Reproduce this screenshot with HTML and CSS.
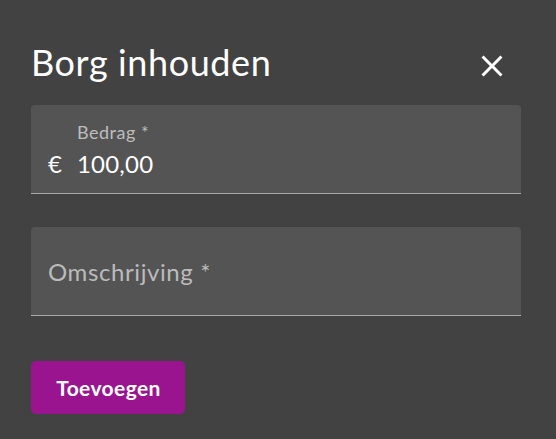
FILE: index.html
```html
<!DOCTYPE html>
<html lang="nl">
<head>
<meta charset="utf-8">
<title>Borg inhouden</title>
<link rel="stylesheet" href="styles.css">
</head>
<body>
<div class="dialog">
  <div class="header">
    <h1 class="title">Borg inhouden</h1>
    <button class="close" aria-label="Sluiten">
      <svg viewBox="0 0 24 24" width="36" height="36"><path fill="#ffffff" d="M19 6.41L17.59 5 12 10.59 6.41 5 5 6.41 10.59 12 5 17.59 6.41 19 12 13.41 17.59 19 19 17.59 13.41 12z"/></svg>
    </button>
  </div>
  <div class="field field-filled">
    <span class="label">Bedrag *</span>
    <span class="prefix">€</span>
    <span class="value">100,00</span>
  </div>
  <div class="field field-empty">
    <span class="placeholder">Omschrijving *</span>
  </div>
  <div class="actions">
    <button class="btn">Toevoegen</button>
  </div>
</div>
</body>
</html>
```
FILE: styles.css
```css
html, body {
  margin: 0;
  background: #424242;
}
body {
  font-family: Lato, "Open Sans", sans-serif;
  color: #ffffff;
}
.dialog {
  padding: 40px 35px 0 31px;
}
.header {
  display: flex;
  justify-content: space-between;
  align-items: flex-start;
  margin-bottom: 21px;
}
.title {
  margin: 0;
  font-size: 36px;
  line-height: 44px;
  font-weight: 400;
  letter-spacing: 0.6px;
}
.close {
  width: 36px;
  height: 36px;
  margin: 8px 11px 0 0;
  padding: 0;
  border: 0;
  background: transparent;
  display: flex;
}
.field {
  background: #545454;
  border-radius: 4px 4px 0 0;
  border-bottom: 1px solid #a8a8a8;
  height: 88px;
  box-sizing: content-box;
  padding-left: 17px;
}
.field-filled {
  display: grid;
  grid-template-columns: 29px 1fr;
  grid-template-rows: 22px 28px;
  row-gap: 7px;
  padding-top: 16px;
  height: 72px;
}
.label {
  grid-column: 2;
  grid-row: 1;
  font-size: 18px;
  line-height: 22px;
  color: #bdbdbd;
  letter-spacing: 0.5px;
}
.prefix {
  grid-column: 1;
  grid-row: 2;
  font-size: 24px;
  line-height: 28px;
}
.value {
  grid-column: 2;
  grid-row: 2;
  font-size: 24px;
  line-height: 28px;
  letter-spacing: 0.2px;
}
.field-empty {
  margin-top: 33px;
  padding-top: 31px;
  height: 57px;
}
.placeholder {
  display: block;
  font-size: 24px;
  line-height: 28px;
  color: #bbbbbb;
  letter-spacing: 0.6px;
}
.actions {
  margin-top: 45px;
}
.btn {
  font-family: inherit;
  font-size: 21px;
  font-weight: 700;
  color: #ffffff;
  background: #9a148f;
  border: 0;
  border-radius: 5px;
  height: 53px;
  width: 154px;
  padding: 0 0 0 1px;
  letter-spacing: 0.4px;
}
```
